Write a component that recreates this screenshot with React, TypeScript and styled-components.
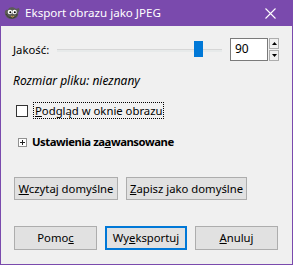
import React from "react";
import styled, { createGlobalStyle } from "styled-components";

const Global = createGlobalStyle`
  html, body { margin: 0; padding: 0; background: #f0f0f0; }
  body { font-family: "Noto Sans", "Segoe UI", sans-serif; font-size: 11.3px; color: #000; }
  * { box-sizing: border-box; }
`;

const Window = styled.div`
  width: 293px;
  height: 265px;
  display: flex;
  flex-direction: column;
  border: 1px solid #7a4aad;
  border-top: none;
  background: #f0f0f0;
`;

const TitleBar = styled.div`
  height: 26px;
  margin: 0 -1px;
  background: #7a4aad;
  display: flex;
  align-items: center;
  padding: 0 0 0 3px;
  color: #fff;
  font-size: 11.6px;
`;

const TitleText = styled.span`
  flex: 1;
  margin-left: 4px;
  line-height: 16px;
`;

const CloseBox = styled.div`
  width: 46px;
  height: 26px;
  display: flex;
  align-items: center;
  justify-content: center;
`;

const Body = styled.div`
  flex: 1;
  display: flex;
  flex-direction: column;
  padding: 12px 13px 0 12px;
`;

const QualityRow = styled.div`
  display: flex;
  align-items: center;
  height: 23px;
`;

const Label = styled.span`
  line-height: 16px;
  white-space: nowrap;
`;

const U = styled.span`
  text-decoration: underline;
`;

const SliderTrack = styled.div`
  position: relative;
  flex: 1;
  height: 23px;
  margin: 0 8px 0 8px;
  &::before {
    content: "";
    position: absolute;
    left: 0;
    right: 0;
    top: 11px;
    height: 2px;
    background: #e7eaea;
    border-top: 1px solid #d6d6d6;
  }
`;

const Thumb = styled.div`
  position: absolute;
  top: 3px;
  width: 9px;
  height: 16px;
  background: #0078d7;
`;

const Spin = styled.div`
  display: flex;
  align-items: stretch;
  height: 23px;
`;

const SpinInput = styled.div`
  width: 38px;
  background: #fff;
  border: 1px solid #7a7a7a;
  padding: 2px 0 0 4px;
  line-height: 16px;
  font-size: 12px;
`;

const SpinArrows = styled.div`
  width: 10px;
  margin-left: 1px;
  display: flex;
  flex-direction: column;
  gap: 1px;
`;

const Arrow = styled.div`
  flex: 1;
  background: #f0f0f0;
  border: 1px solid #adadad;
  display: flex;
  align-items: center;
  justify-content: center;
`;

const Info = styled.div`
  margin-top: 12px;
  font-style: italic;
  font-size: 12px;
  line-height: 16px;
`;

const CheckRow = styled.div`
  margin-top: 13px;
  display: flex;
  align-items: center;
  height: 17px;
  padding-left: 3px;
`;

const CheckBox = styled.div`
  width: 12px;
  height: 12px;
  background: #fff;
  border: 1px solid #333;
`;

const FocusLabel = styled.span`
  margin-left: 5px;
  border: 1px dotted #000;
  padding: 0 1px;
  line-height: 15px;
`;

const ExpanderRow = styled.div`
  margin-top: 15px;
  display: flex;
  align-items: center;
  height: 16px;
  padding-left: 5px;
`;

const PlusBox = styled.div`
  width: 9px;
  height: 9px;
  border: 1px solid #919191;
  background: #fff;
  position: relative;
  &::before, &::after {
    content: "";
    position: absolute;
    background: #222;
  }
  &::before { left: 1px; top: 3px; width: 5px; height: 1px; }
  &::after { left: 3px; top: 1px; width: 1px; height: 5px; }
`;

const BoldLabel = styled.span`
  margin-left: 5px;
  font-weight: bold;
  letter-spacing: -0.45px;
  line-height: 16px;
`;

const ButtonRow = styled.div<{ $top: number; $gap: number }>`
  margin-top: ${(p) => p.$top}px;
  display: flex;
  gap: ${(p) => p.$gap}px;
  padding-left: 1px;
`;

const Button = styled.button<{ $w: number; $h: number; $default?: boolean }>`
  font: inherit;
  color: #000;
  padding: 0;
  height: ${(p) => p.$h}px;
  width: ${(p) => p.$w}px;
  background: #e1e1e1;
  border: ${(p) => (p.$default ? "2px solid #0078d7" : "1px solid #adadad")};
  line-height: 16px;
  white-space: nowrap;
`;

function GimpIcon() {
  return (
    <svg width="18" height="16" viewBox="0 0 18 16">
      <path d="M2 9 C1 6 3 4 5 5 L6 3 C8 2 11 2 13 4 L16 3 C17 5 16 7 15 8 C16 11 13 14 9 14 C5 14 3 12 2 9 Z" fill="#5b5b57" />
      <path d="M3 9 C4 11 6 13 9 13 C12 13 14 11 14 9" fill="none" stroke="#3a3a36" strokeWidth="1" />
      <circle cx="7" cy="7" r="2.3" fill="#fff" />
      <circle cx="11.5" cy="7" r="2.3" fill="#fff" />
      <circle cx="7.3" cy="7.2" r="1" fill="#000" />
      <circle cx="11.8" cy="7.2" r="1" fill="#000" />
      <path d="M8 11 L9.5 12 L11 11" fill="none" stroke="#d9a441" strokeWidth="1" />
    </svg>
  );
}

export default function App() {
  const value = 90;
  return (
    <>
      <Global />
      <Window>
        <TitleBar>
          <GimpIcon />
          <TitleText>Eksport obrazu jako JPEG</TitleText>
          <CloseBox>
            <svg width="11" height="11" viewBox="0 0 11 11">
              <path d="M0.5 0.5 L10.5 10.5 M10.5 0.5 L0.5 10.5" stroke="#fff" strokeWidth="1.1" />
            </svg>
          </CloseBox>
        </TitleBar>
        <Body>
          <QualityRow>
            <Label>
              <U>J</U>akość:
            </Label>
            <SliderTrack>
              <Thumb style={{ left: `calc(${(value - 2.5) / 100} * (100% - 9px))` }} />
            </SliderTrack>
            <Spin>
              <SpinInput>90</SpinInput>
              <SpinArrows>
                <Arrow>
                  <svg width="5" height="3" viewBox="0 0 5 3"><path d="M0 3 L2.5 0 L5 3 Z" fill="#000" /></svg>
                </Arrow>
                <Arrow>
                  <svg width="5" height="3" viewBox="0 0 5 3"><path d="M0 0 L2.5 3 L5 0 Z" fill="#000" /></svg>
                </Arrow>
              </SpinArrows>
            </Spin>
          </QualityRow>
          <Info>Rozmiar pliku: nieznany</Info>
          <CheckRow>
            <CheckBox />
            <FocusLabel>
              <U>P</U>odgląd w oknie obrazu
            </FocusLabel>
          </CheckRow>
          <ExpanderRow>
            <PlusBox />
            <BoldLabel>
              Ustawienia za<U>a</U>wansowane
            </BoldLabel>
          </ExpanderRow>
          <ButtonRow $top={27} $gap={8}>
            <Button $w={104} $h={23}>
              <U>W</U>czytaj domyślne
            </Button>
            <Button $w={121} $h={23}>
              <U>Z</U>apisz jako domyślne
            </Button>
          </ButtonRow>
          <ButtonRow $top={26} $gap={8}>
            <Button $w={83} $h={24}>
              Pomo<U>c</U>
            </Button>
            <Button $w={82} $h={24} $default>
              Wy<U>e</U>ksportuj
            </Button>
            <Button $w={83} $h={24}>
              <U>A</U>nuluj
            </Button>
          </ButtonRow>
        </Body>
      </Window>
    </>
  );
}
